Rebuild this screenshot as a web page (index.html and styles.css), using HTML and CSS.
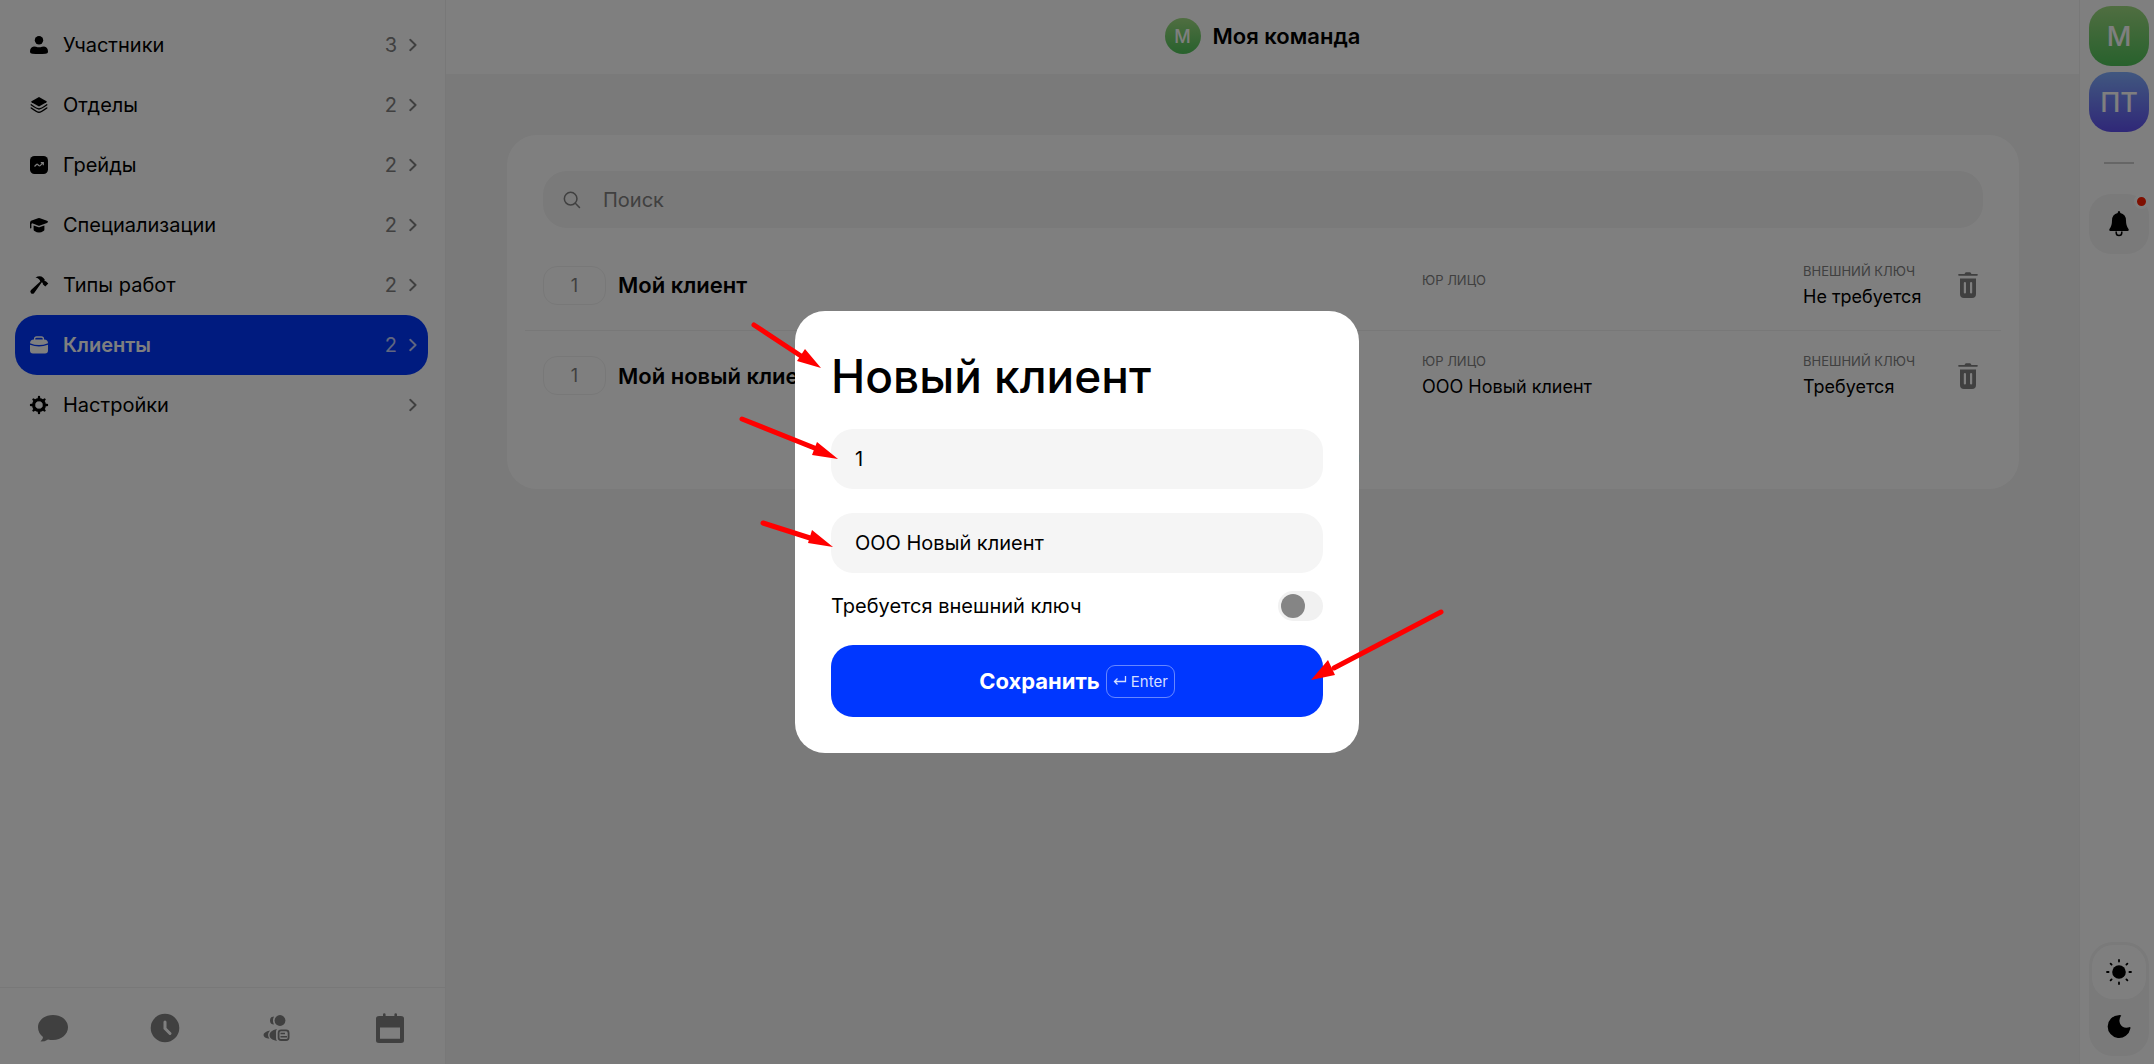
FILE: index.html
```
<!DOCTYPE html>
<html lang="ru">
<head>
  <meta charset="UTF-8" />
  <meta name="viewport" content="width=device-width, initial-scale=1" />
  <title>Моя команда</title>
  <link rel="stylesheet" href="styles.css">
</head>
<body>

<!-- shared icons -->
<svg class="sprite" aria-hidden="true">
  <symbol id="chevron" viewBox="0 0 8 14"><path d="M1.2 1.8L6.6 7l-5.4 5.2" fill="none" stroke="currentColor" stroke-width="1.900" stroke-linecap="round" stroke-linejoin="round"/></symbol>
  <symbol id="trash" viewBox="0 0 20 26"><path d="M1 2h5.500l.6-1Q7.400.3 8 .3h4q.6 0 .9.700l.6 1H19a.8.800 0 0 1 0 1.700H1A.8.800 0 0 1 1 2z"/><path fill-rule="evenodd" d="M2 6.500h16V22q0 4-4 4H6q-4 0-4-4zM5.800 11v9.500q0 1 1.100 1t1.100-1V11q0-1-1.100-1t-1.100 1zM12 11v9.500q0 1 1.100 1t1.100-1V11q0-1-1.100-1T12 11z"/></symbol>
</svg>

<div class="app">

  <aside class="sidebar">
    <nav class="menu">
      <a class="menu-item" href="#">
        <svg class="icon" viewBox="0 0 18 18"><circle cx="9" cy="4.200" r="4.200"/><path d="M0 15.500C0 12.500 1.500 10.400 4 10.400q1.200 0 2 .4 3 1 6 0 .8-.4 2-.4c2.500 0 4 2.100 4 5.100 0 1.500-1 2.100-2.500 2.300-4 .3-9 .3-13 0C1 17.600 0 17 0 15.500z"/></svg>
        <span class="label">Участники</span><span class="count">3</span>
        <svg class="chevron"><use href="#chevron"/></svg>
      </a>
      <a class="menu-item" href="#">
        <svg class="icon" viewBox="0 0 18 18"><path d="M9 1l7.500 4.200q.8.500 0 1L9 10.600 1.500 6.200q-.8-.5 0-1z"/><path d="M1.200 8.800C4 10.800 7 13 9 13s5-2.200 7.800-4.200M1.200 12C4 14 7 16.300 9 16.300s5-2.300 7.800-4.300" fill="none" stroke="currentColor" stroke-width="1.400" stroke-linecap="round"/></svg>
        <span class="label">Отделы</span><span class="count">2</span>
        <svg class="chevron"><use href="#chevron"/></svg>
      </a>
      <a class="menu-item" href="#">
        <svg class="icon" viewBox="0 0 18 18"><rect width="18" height="18" rx="4.500"/><path class="cut" d="M4.500 10.500l2-2q.6-.6 1.200 0l1.200 1.200q.6.600 1.200 0L13 6.800M10.800 6.700h2.500v2.500"/></svg>
        <span class="label">Грейды</span><span class="count">2</span>
        <svg class="chevron"><use href="#chevron"/></svg>
      </a>
      <a class="menu-item" href="#">
        <svg class="icon" viewBox="0 0 18 18"><path d="M8 2.200q1-.4 2 0l7 2.600q2 1 0 2.100l-7 2.600q-1 .4-2 0L2.200 7.300 1.400 8v3.800a.7.700 0 0 1-1.400 0V7q0-1.500 1-2.200z"/><path d="M3.600 9.400l4.400 1.600q1 .4 2 0l4.400-1.600v4q0 1-.9 1.600-4.500 3-9 0-.9-.6-.9-1.600z"/></svg>
        <span class="label">Специализации</span><span class="count">2</span>
        <svg class="chevron"><use href="#chevron"/></svg>
      </a>
      <a class="menu-item" href="#">
        <svg class="icon" viewBox="0 0 18 18"><path d="M5.500 1.600Q10-1 13.200 1.800l1.500 1.800-.2 1.500 1.400.1 2.400 2.400-3 3-2.500-2.400v-1.300l-1-.6L4 17.200q-1.400 1.200-3 0-1.400-1.600 0-3.200L10.300 5.500Q9.500 2.500 5.500 1.600z"/></svg>
        <span class="label">Типы работ</span><span class="count">2</span>
        <svg class="chevron"><use href="#chevron"/></svg>
      </a>
      <a class="menu-item active" href="#">
        <svg class="icon" viewBox="0 0 18 18"><path d="M4.600 4V3q0-2 2-2h4.800q2 0 2 2v1" fill="none" stroke="currentColor" stroke-width="1.300"/><path d="M4 3.400h10q4 0 4 3.800Q9 11 0 7.200 0 3.400 4 3.400z"/><path d="M0 8.800q9 3.600 18 0v5.700q0 3-3 3H3q-3 0-3-3z"/></svg>
        <span class="label">Клиенты</span><span class="count">2</span>
        <svg class="chevron"><use href="#chevron"/></svg>
      </a>
      <a class="menu-item" href="#">
        <svg class="icon" viewBox="0 0 18 18"><circle cx="9" cy="9" r="5.400" fill="none" stroke="currentColor" stroke-width="3.200"/><path d="M9 1v3M9 14v3M1 9h3M14 9h3M3.500 3.500l2 2M12.500 12.500l2 2M3.500 14.500l2-2M12.500 5.500l2-2" stroke="currentColor" stroke-width="2.400" stroke-linecap="round"/></svg>
        <span class="label">Настройки</span>
        <svg class="chevron"><use href="#chevron"/></svg>
      </a>
    </nav>

    <div class="tabs">
      <button class="tab" aria-label="Чат"><svg viewBox="0 0 30 30"><path d="M15 2c8.500 0 15 5.300 15 12.300S23.500 27 15 27q-2.600 0-5-.6Q7 28.600 2.500 28.600q2.500-2 2.500-4.600Q0 20 0 14.300C0 7.300 6.500 2 15 2z"/></svg></button>
      <button class="tab" aria-label="Время"><svg viewBox="0 0 30 30"><circle cx="15" cy="15" r="14.300"/><path class="hand" d="M15 9v6.500l5 5"/></svg></button>
      <button class="tab" aria-label="Команда"><svg viewBox="0 0 30 30"><circle cx="17" cy="7.500" r="5.400"/><path d="M11 3.500a4 4 0 1 0 0 8q-2-4 0-8zM7 17.500Q.5 19 .5 22t6 3.700q-3-4 .5-8.200zM14 16C9 17 6.500 19.500 6.500 22.300S9 27.100 14 28q-1-1-1-3v-6q0-2 1-3z"/><rect x="15.600" y="17.400" width="10" height="9.600" rx="2.500" fill="none" stroke="currentColor" stroke-width="1.800"/><path d="M17.500 20.500h4.500M17.500 23.800h6.500" stroke="currentColor" stroke-width="1.600"/></svg></button>
      <button class="tab" aria-label="Календарь"><svg viewBox="0 0 30 30"><path fill-rule="evenodd" d="M8 1.500a1.300 1.300 0 0 1 2.600 0V3h8.800V1.500a1.300 1.300 0 0 1 2.600 0V3h4q3 0 3 2.500v22q0 2.500-3 2.500H4q-3 0-3-2.500v-22Q1 3 4 3h4zM5 14.500v11.300h20V14.500z"/></svg></button>
    </div>
  </aside>

  <main class="main">
    <header class="topbar">
      <span class="team-avatar">М</span>
      <h1 class="team-name">Моя команда</h1>
    </header>

    <section class="card">
      <label class="search">
        <svg viewBox="0 0 20 20"><circle cx="8.500" cy="8.500" r="7" fill="none" stroke="currentColor" stroke-width="1.700"/><path d="M13.700 13.700l4.600 4.600" stroke="currentColor" stroke-width="1.700" stroke-linecap="round"/></svg>
        <input type="search" placeholder="Поиск" aria-label="Поиск">
      </label>

      <ul class="clients">
        <li class="client">
          <span class="badge">1</span>
          <strong class="client-name">Мой клиент</strong>
          <div class="field"><small>ЮР ЛИЦО</small></div>
          <div class="field key"><small>ВНЕШНИЙ КЛЮЧ</small><span>Не требуется</span></div>
          <button class="remove" aria-label="Удалить"><svg><use href="#trash"/></svg></button>
        </li>
        <li class="client">
          <span class="badge">1</span>
          <strong class="client-name">Мой новый клиент</strong>
          <div class="field"><small>ЮР ЛИЦО</small><span>ООО Новый клиент</span></div>
          <div class="field key"><small>ВНЕШНИЙ КЛЮЧ</small><span>Требуется</span></div>
          <button class="remove" aria-label="Удалить"><svg><use href="#trash"/></svg></button>
        </li>
      </ul>

      <a class="add-link" href="#">Создать ещё клиента</a>
    </section>
  </main>

  <aside class="rail">
    <button class="team green">М</button>
    <button class="team blue">ПТ</button>
    <hr class="divider">
    <button class="bell" aria-label="Уведомления">
      <svg viewBox="0 0 20 26"><path d="M10 0q1.300 0 1.300 2Q17 3.300 17 9.500q0 5.500 2.500 8.500.8 1.800-1 2H1.500q-1.800-.2-1-2Q3 15 3 9.500 3 3.300 8.700 2 8.700 0 10 0z"/><path d="M7.200 20.500v1.300a2.800 2.800 0 0 0 5.600 0v-1.300" fill="none" stroke="currentColor" stroke-width="1.500"/></svg>
      <span class="dot"></span>
    </button>
    <div class="theme">
      <button class="theme-btn on" aria-label="Светлая тема"><svg viewBox="0 0 26 26"><circle cx="13" cy="13" r="6.800"/><path d="M13 1v1.600M13 23.400V25M1 13h1.600M23.400 13H25M4.600 4.600l1 1M20.400 20.400l1 1M4.600 21.400l1-1M20.400 5.600l1-1" stroke="currentColor" stroke-width="1.800" stroke-linecap="round"/></svg></button>
      <button class="theme-btn" aria-label="Тёмная тема"><svg viewBox="0 0 26 26"><path d="M12.500 2.200q1.800-.4 2.800.2-3 4-1.200 8.300 2.800 5.500 9.900 3.300.7 0 .3 1.800A11.400 11.400 0 1 1 12.500 2.200z"/></svg></button>
    </div>
  </aside>
</div>

<!-- new client dialog -->
<div class="overlay">
  <form class="modal" role="dialog" aria-labelledby="modalTitle">
    <h2 id="modalTitle">Новый клиент</h2>
    <input class="text-input" type="text" value="1" aria-label="Название">
    <input class="text-input" type="text" value="ООО Новый клиент" aria-label="Юр лицо">
    <label class="switch-row">
      Требуется внешний ключ
      <input class="switch" type="checkbox">
    </label>
    <button class="save" type="button">Сохранить
      <kbd><svg viewBox="0 0 14 12"><path d="M12.500 1v5.500h-11M4.500 3.500l-3 3 3 3" fill="none" stroke="currentColor" stroke-width="1.300"/></svg>Enter</kbd>
    </button>

    <!-- pointer arrows -->
    <svg class="arrows" viewBox="0 0 564 442" aria-hidden="true">
      <g stroke="#f00" stroke-width="5" stroke-linecap="round">
        <path d="M-41 14L6 45M-53 108L22 138M-32 212L15 227M646 301L539 357"/>
      </g>
      <g fill="#f00">
        <path d="M26 57L10 38 2 50zM43 148L22 131 17 144zM38 236L17 219 13 232zM516 369L533 349 540 364z"/>
      </g>
    </svg>
  </form>
</div>

</body>
</html>
```
FILE: styles.css
```
* {
  box-sizing: border-box;
}
body {
  margin: 0;
  font-family: Inter, "Noto Sans", sans-serif;
  font-size: 20px;
  color: #000;
  background: #f4f4f4;
}
button, input, kbd {
  font-family: inherit;
}
button {
  border: none;
  padding: 0;
  background: none;
  color: inherit;
  cursor: pointer;
}
a {
  text-decoration: none;
  color: inherit;
}
svg {
  fill: currentColor;
}
.sprite {
  display: none;
}
.app {
  display: flex;
  min-height: 100vh;
}

/* left menu */
.sidebar {
  width: 446px;
  flex: none;
  display: flex;
  flex-direction: column;
  background: #fff;
  border-right: 1px solid #f1f1f1;
}
.menu {
  flex: 1;
  padding: 15px 17px 15px 15px;
}
.menu-item {
  display: flex;
  align-items: center;
  height: 60px;
  padding: 0 11px 0 15px;
  border-radius: 22px;
}
.icon {
  width: 18px;
  height: 18px;
  margin-right: 15px;
  overflow: visible;
}
.icon .cut {
  fill: none;
  stroke: #fff;
  stroke-width: 1.2;
}
.label {
  flex: 1;
}
.count {
  color: #808080;
  margin-right: 12px;
}
.chevron {
  width: 8px;
  height: 14px;
  color: #808080;
}
.menu-item.active {
  background: #0037ff;
  color: #fff;
}
.active .label {
  font-weight: 600;
}
.active .count, .active .chevron {
  color: #c2cdff;
}
.tabs {
  display: flex;
  justify-content: space-between;
  align-items: center;
  height: 77px;
  padding: 4px 40px 0 38px;
  border-top: 1px solid #f1f1f1;
  color: #808080;
}
.tab, .tab svg {
  display: block;
  width: 30px;
  height: 30px;
}
.tab .hand {
  fill: none;
  stroke: #fff;
  stroke-width: 3;
  stroke-linecap: round;
}

/* centre */
.main {
  flex: 1;
  min-width: 0;
}
.topbar {
  display: flex;
  align-items: center;
  justify-content: center;
  gap: 12px;
  height: 74px;
  padding-bottom: 2px;
  background: #fff;
}
.team-avatar {
  display: flex;
  align-items: center;
  justify-content: center;
  width: 36px;
  height: 36px;
  border-radius: 50%;
  background: linear-gradient(#a0dc82, #50c35a);
  color: #fff;
  font-size: 18px;
  font-weight: 500;
}
.team-name {
  margin: 0;
  font-size: 22px;
  font-weight: 600;
}
.card {
  margin: 61px 60px 0 61px;
  padding: 36px 18px 15px;
  border-radius: 30px;
  background: #fff;
}
.search {
  display: flex;
  align-items: center;
  height: 57px;
  margin: 0 18px;
  padding: 0 20px;
  border-radius: 24px;
  background: #f4f4f4;
  color: #808080;
}
.search svg {
  width: 18px;
  height: 18px;
  margin-right: 20px;
}
.search input {
  flex: 1;
  border: none;
  outline: none;
  background: none;
  font-size: 20px;
}
.search input::placeholder {
  color: #808080;
}
.clients {
  list-style: none;
  margin: 12px 0 0;
  padding: 0;
}
.client {
  display: flex;
  align-items: center;
  height: 90px;
  padding: 0 23px 0 18px;
}
.client + .client {
  border-top: 1px solid #f1f1f1;
}
.badge {
  width: 63px;
  height: 39px;
  margin-right: 12px;
  border: 1px solid #f1f1f1;
  border-radius: 14px;
  color: #808080;
  font-size: 18px;
  line-height: 37px;
  text-align: center;
}
.client-name {
  flex: 1;
  font-size: 22px;
  font-weight: 600;
}
.field {
  display: flex;
  flex-direction: column;
  width: 381px;
  min-height: 36px;
  padding-bottom: 3px;
  font-size: 18px;
  line-height: 26px;
}
.field small {
  color: #808080;
  font-size: 13px;
}
.field.key {
  width: 155px;
}
.remove svg {
  display: block;
  width: 20px;
  height: 26px;
  color: #808080;
}
.add-link {
  display: block;
  margin-top: 18px;
  text-align: center;
  font-size: 18px;
  font-weight: 600;
  line-height: 36px;
  color: #0066ff;
}

/* right rail */
.rail {
  width: 75px;
  flex: none;
  display: flex;
  flex-direction: column;
  align-items: center;
  gap: 6px;
  padding: 6px 5px 8px 9px;
  background: #fff;
  border-left: 1px solid #f1f1f1;
}
.team {
  width: 60px;
  height: 60px;
  border-radius: 22px;
  color: #fff;
  font-size: 27px;
  font-weight: 500;
}
.green {
  background: linear-gradient(#a0dc82, #50c35a);
}
.blue {
  background: linear-gradient(#82afff, #5f50f0);
}
.divider {
  width: 30px;
  height: 2px;
  margin: 24px 0;
  border: none;
  background: #ccc;
}
.bell {
  position: relative;
  display: flex;
  align-items: center;
  justify-content: center;
  width: 60px;
  height: 60px;
  border-radius: 22px;
  background: #f4f4f4;
}
.bell svg {
  width: 20px;
  height: 26px;
}
.dot {
  position: absolute;
  top: 0;
  right: 0;
  width: 15px;
  height: 15px;
  border: 3px solid #fff;
  border-radius: 50%;
  background: #ff1e00;
}
.theme {
  display: flex;
  flex-direction: column;
  margin-top: auto;
  padding: 3px;
  border-radius: 24px;
  background: #f4f4f4;
}
.theme-btn {
  display: flex;
  align-items: center;
  justify-content: center;
  width: 54px;
  height: 54px;
  border-radius: 21px;
}
.theme-btn.on {
  background: #fff;
}
.theme-btn svg {
  width: 26px;
  height: 26px;
}

/* dialog */
.overlay {
  position: fixed;
  inset: 0;
  display: flex;
  align-items: center;
  justify-content: center;
  background: rgba(0, 0, 0, 0.5);
}
.modal {
  position: relative;
  display: flex;
  flex-direction: column;
  width: 564px;
  padding: 36px;
  border-radius: 30px;
  background: #fff;
}
.modal h2 {
  margin: 0 0 24px;
  font-size: 46px;
  font-weight: 500;
  line-height: 58px;
}
.text-input {
  height: 60px;
  margin-bottom: 24px;
  padding: 0 24px;
  border: none;
  border-radius: 22px;
  background: #f5f5f5;
  font-size: 20px;
}
.switch-row {
  display: flex;
  align-items: center;
  justify-content: space-between;
  height: 30px;
  margin: -6px 0 24px;
}
.switch {
  appearance: none;
  width: 45px;
  height: 30px;
  margin: 0;
  padding: 3px;
  border-radius: 15px;
  background: #f1f1f1;
}
.switch::before {
  content: "";
  display: block;
  width: 24px;
  height: 24px;
  border-radius: 50%;
  background: #858585;
}
.save {
  display: flex;
  align-items: center;
  justify-content: center;
  gap: 6px;
  height: 72px;
  border-radius: 22px;
  background: #0037ff;
  color: #fff;
  font-size: 22px;
  font-weight: 700;
}
.save kbd {
  display: flex;
  align-items: center;
  gap: 4px;
  height: 33px;
  padding: 0 6px;
  border: 1px solid rgba(255, 255, 255, 0.4);
  border-radius: 9px;
  color: #d5deff;
  font-size: 15px;
  font-weight: 400;
}
.save kbd svg {
  width: 14px;
  height: 12px;
}
.arrows {
  position: absolute;
  inset: 0;
  width: 100%;
  height: 100%;
  overflow: visible;
  pointer-events: none;
}
```
